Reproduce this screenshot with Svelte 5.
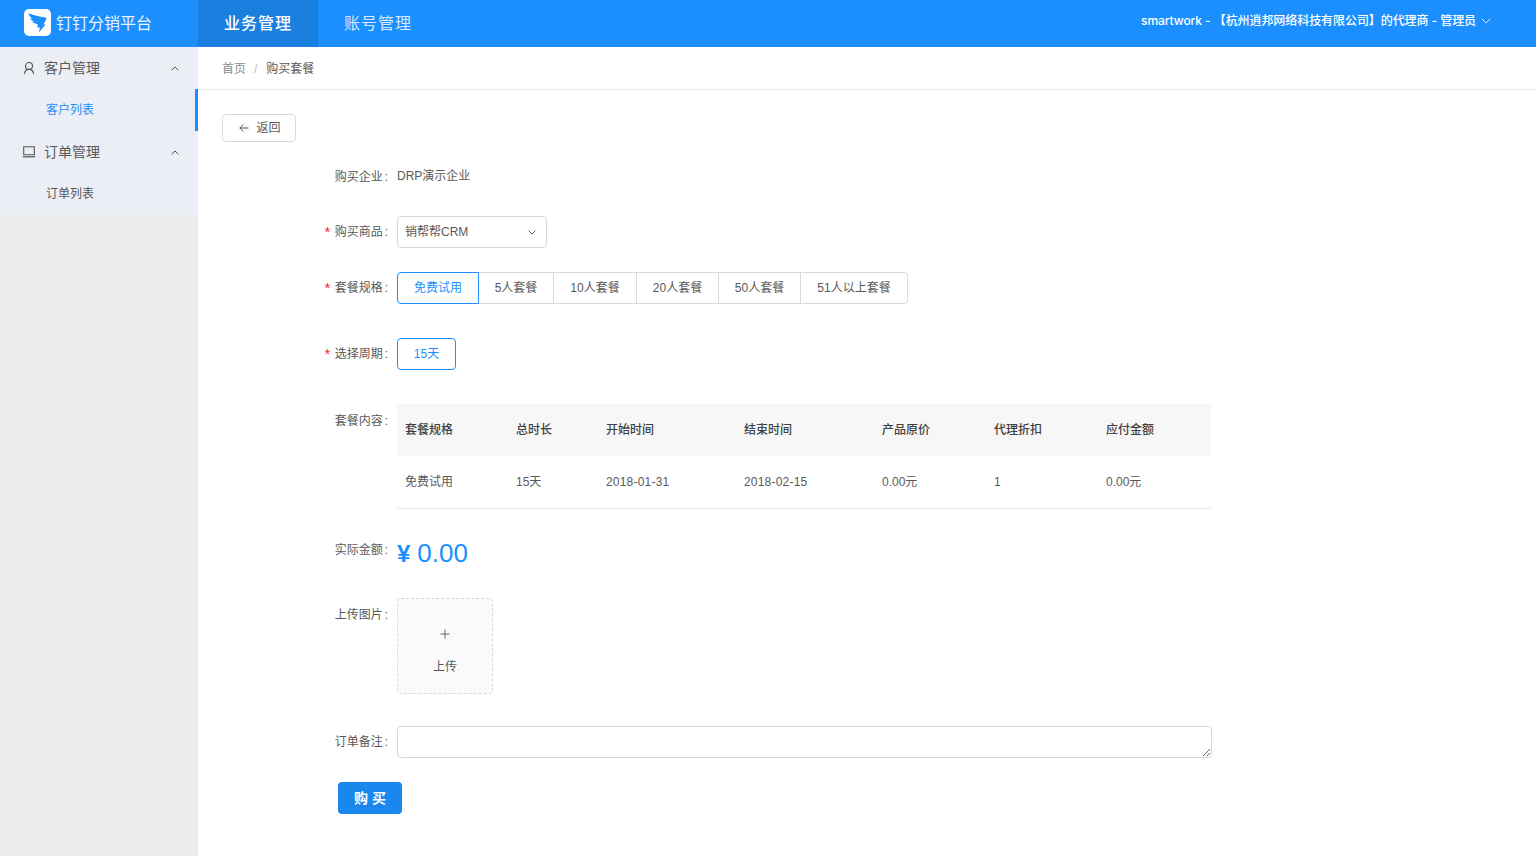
<script>
  const specs = ['免费试用', '5人套餐', '10人套餐', '20人套餐', '50人套餐', '51人以上套餐'];
  const heads = ['套餐规格', '总时长', '开始时间', '结束时间', '产品原价', '代理折扣', '应付金额'];
  const row = ['免费试用', '15天', '2018-01-31', '2018-02-15', '0.00元', '1', '0.00元'];
</script>

<div class="page">
  <header class="top">
    <div class="brand">
      <span class="logo">
        <svg viewBox="0 0 27 27" width="27" height="27">
          <path fill="#1c8fff" d="M4.5 4.2 C9 6 15.5 7.6 21.6 8.6 C22.6 9 22.3 10.4 21.4 12 L19.4 15.4 L21.6 15.4 L14.8 23.6 L16 18.6 L13.2 18.6 L14 15.4 C11.4 14.8 9.4 14 7.6 12.8 L11 12.8 C8.6 12 6.6 10.6 5.8 9.4 L8.6 9.6 C6.4 8.4 4.8 6.4 4.5 4.2 Z"/>
        </svg>
      </span>
      <span class="brand-name">钉钉分销平台</span>
    </div>
    <nav class="tabs">
      <span class="tab active">业务管理</span>
      <span class="tab">账号管理</span>
    </nav>
    <div class="user">
      <span>smartwork - 【杭州逍邦网络科技有限公司】的代理商 - 管理员</span>
      <svg class="user-chev" viewBox="0 0 10 6" width="10" height="6"><path d="M.7.7 5 5 9.3.7" fill="none" stroke="#cfe6ff" stroke-width="1"/></svg>
    </div>
  </header>

  <div class="body">
    <aside class="side">
      <div class="menu">
        <div class="group">
          <svg class="gi" viewBox="0 0 14 14" width="14" height="14"><circle cx="7" cy="5" r="3.5" fill="none" stroke="#555" stroke-width="1.1"/><path d="M2.500 13c.2-2.700 1.800-4.600 4.500-4.600s4.300 1.900 4.500 4.600" fill="none" stroke="#555" stroke-width="1.1"/></svg>
          <span class="group-name">客户管理</span>
          <svg class="chev" viewBox="0 0 8 5" width="8" height="5"><path d="M.6 4.300 4 1l3.400 3.300" fill="none" stroke="#555" stroke-width="1"/></svg>
        </div>
        <div class="item selected">客户列表</div>
        <div class="group">
          <svg class="gi" viewBox="0 0 14 14" width="14" height="14"><path d="M1.700 1.700h10.600v8.100H1.700z" fill="none" stroke="#555" stroke-width="1.1"/><path d="M.8 11.800h12.400" stroke="#555" stroke-width="1.200"/></svg>
          <span class="group-name">订单管理</span>
          <svg class="chev" viewBox="0 0 8 5" width="8" height="5"><path d="M.6 4.300 4 1l3.400 3.300" fill="none" stroke="#555" stroke-width="1"/></svg>
        </div>
        <div class="item">订单列表</div>
      </div>
    </aside>

    <main class="main">
      <div class="crumbs">
        <span class="crumb">首页</span>
        <span class="sep">/</span>
        <span class="crumb last">购买套餐</span>
      </div>

      <button class="back">
        <svg viewBox="0 0 10 10" width="10" height="10"><path d="M9.500 5H.8M4.400 1.400.8 5l3.600 3.600" fill="none" stroke="#555" stroke-width="1"/></svg>
        <span>返回</span>
      </button>

      <div class="form">
        <div class="line first">
          <span class="label low">购买企业</span>
          <span class="value">DRP演示企业</span>
        </div>

        <div class="line gap24">
          <span class="label req">购买商品</span>
          <div class="select">
            <span>销帮帮CRM</span>
            <svg viewBox="0 0 8 5" width="8" height="5"><path d="M.6.7 4 4l3.400-3.300" fill="none" stroke="#666" stroke-width="1"/></svg>
          </div>
        </div>

        <div class="line gap24">
          <span class="label req">套餐规格</span>
          <div class="radios">
            {#each specs as s, i}
              <span class="radio" class:on={i === 0}>{s}</span>
            {/each}
          </div>
        </div>

        <div class="line gap34">
          <span class="label req">选择周期</span>
          <div class="radios">
            <span class="radio on solo">15天</span>
          </div>
        </div>

        <div class="line gap34 top-align">
          <span class="label low">套餐内容</span>
          <table class="plan">
            <thead>
              <tr>{#each heads as h}<th>{h}</th>{/each}</tr>
            </thead>
            <tbody>
              <tr>{#each row as c}<td>{c}</td>{/each}</tr>
            </tbody>
          </table>
        </div>

        <div class="line amount-line top-align">
          <span class="label low">实际金额</span>
          <div class="amount"><span class="yen">¥</span><span class="num">0.00</span></div>
        </div>

        <div class="line upload-line top-align">
          <span class="label low">上传图片</span>
          <div class="upload">
            <svg viewBox="0 0 10 10" width="10" height="10"><path d="M5 .5v9M.5 5h9" stroke="#666" stroke-width="1"/></svg>
            <span>上传</span>
          </div>
        </div>

        <div class="line gap32">
          <span class="label">订单备注</span>
          <textarea class="note"></textarea>
        </div>

        <button class="buy">购 买</button>
      </div>
    </main>
  </div>
</div>

<style>
  :global(body) {
    margin: 0;
    background: #fff;
  }
  .page {
    width: 1536px;
    height: 856px;
    overflow: hidden;
    display: flex;
    flex-direction: column;
    font-family: "Liberation Sans", "Noto Sans CJK SC", sans-serif;
    font-size: 12px;
    line-height: 20px;
    color: #595959;
  }
  .top {
    height: 47px;
    flex: none;
    display: flex;
    align-items: center;
    background: #1c8fff;
    color: #fff;
  }
  .brand {
    width: 198px;
    box-sizing: border-box;
    padding-left: 24px;
    display: flex;
    align-items: center;
    gap: 5px;
  }
  .logo {
    width: 27px;
    height: 27px;
    background: #fff;
    border-radius: 5px;
    display: flex;
    margin-top: -3px;
  }
  .brand-name {
    font-size: 16px;
    line-height: 20px;
    color: #e8f4ff;
  }
  .tabs {
    display: flex;
    align-self: stretch;
  }
  .tab {
    width: 120px;
    padding-left: 26px;
    box-sizing: border-box;
    line-height: 47px;
    font-size: 16px;
    letter-spacing: 1px;
    color: #d6eaff;
  }
  .tab.active {
    background: #1a7fdf;
    color: #fff;
    font-weight: 500;
  }
  .user {
    margin-left: auto;
    margin-right: 45px;
    display: flex;
    align-items: center;
    gap: 5px;
    font-family: Inter, "Noto Sans CJK SC", sans-serif;
    font-weight: 500;
    letter-spacing: -0.07px;
    margin-top: -6px;
  }
  .body {
    flex: 1;
    display: flex;
    min-height: 0;
  }
  .side {
    width: 198px;
    flex: none;
    background: #ececec;
  }
  .menu {
    background: #ebeef5;
  }
  .group {
    height: 42px;
    display: flex;
    align-items: center;
    padding-left: 22px;
    padding-right: 19px;
    font-size: 14px;
    line-height: 40px;
    color: #595959;
  }
  .gi {
    flex: none;
    margin-right: 8px;
  }
  .group-name {
    flex: 1;
  }
  .item {
    height: 42px;
    line-height: 42px;
    padding-left: 46px;
    color: #595959;
    box-sizing: border-box;
  }
  .item.selected {
    color: #1c8fff;
    border-right: 3px solid #1c8fff;
  }
  .main {
    flex: 1;
    min-width: 0;
    background: #fff;
  }
  .crumbs {
    height: 43px;
    box-sizing: border-box;
    border-bottom: 1px solid #e8e8e8;
    padding: 2px 0 0 24px;
    display: flex;
    align-items: center;
    color: #8c8c8c;
  }
  .sep {
    margin: 0 9px 0 8px;
    color: #bfbfbf;
  }
  .crumb.last {
    color: #595959;
  }
  .back {
    margin: 24px 0 0 24px;
    width: 74px;
    height: 28px;
    display: flex;
    align-items: center;
    justify-content: center;
    gap: 7px;
    background: #fff;
    border: 1px solid #d9d9d9;
    border-radius: 4px;
    padding: 0 0 0 2px;
    font: inherit;
    color: #595959;
  }
  .form {
    padding-left: 24px;
  }
  .line {
    display: flex;
    align-items: center;
    min-height: 32px;
  }
  .line.first {
    margin-top: 18px;
  }
  .gap24 {
    margin-top: 24px;
  }
  .gap32 {
    margin-top: 32px;
  }
  .gap34 {
    margin-top: 34px;
  }
  .top-align {
    align-items: flex-start;
  }
  .label {
    width: 175px;
    height: 32px;
    flex: none;
    box-sizing: border-box;
    text-align: right;
    padding-right: 9px;
    line-height: 32px;
  }
  .label.low {
    line-height: 34px;
  }
  .label::after {
    content: ":";
    margin-left: 2px;
  }
  .label.req::before {
    content: "*";
    color: #f5222d;
    margin-right: 3px;
    font-family: "Liberation Mono", monospace;
    font-size: 14px;
    line-height: 14px;
    vertical-align: -2px;
  }
  .value {
    line-height: 32px;
    height: 32px;
  }
  .select {
    width: 150px;
    height: 32px;
    box-sizing: border-box;
    border: 1px solid #d9d9d9;
    border-radius: 4px;
    display: flex;
    align-items: center;
    justify-content: space-between;
    padding: 0 10px 0 7px;
  }
  .radios {
    display: flex;
  }
  .radio {
    height: 32px;
    line-height: 30px;
    box-sizing: border-box;
    text-align: center;
    border: 1px solid #d9d9d9;
    border-left: 0;
    color: #595959;
  }
  .radio:nth-child(1) {
    width: 82px;
  }
  .radio:nth-child(2) {
    width: 75px;
  }
  .radio:nth-child(3) {
    width: 83px;
  }
  .radio:nth-child(4),
  .radio:nth-child(5) {
    width: 82px;
  }
  .radio:nth-child(6) {
    width: 107px;
  }
  .radio:first-child {
    border-left: 1px solid #d9d9d9;
    border-radius: 4px 0 0 4px;
  }
  .radio:last-child {
    border-radius: 0 4px 4px 0;
  }
  .radio.on {
    border: 1px solid #1c8fff;
    color: #1c8fff;
  }
  .radio.solo {
    width: 59px;
    border-radius: 4px;
  }
  .plan {
    width: 814px;
    table-layout: fixed;
    border-collapse: collapse;
    font-size: 12px;
  }
  .plan th,
  .plan td {
    height: 52px;
    padding: 0 8px;
    text-align: left;
    box-sizing: border-box;
  }
  .plan th {
    background: #f7f7f7;
    font-weight: 500;
    color: #404040;
  }
  .plan th:first-child {
    border-radius: 4px 0 0 0;
  }
  .plan th:last-child {
    border-radius: 0 4px 0 0;
  }
  .plan td {
    border-bottom: 1px solid #e8e8e8;
    color: #595959;
  }
  .plan td:nth-child(3),
  .plan td:nth-child(4) {
    letter-spacing: 0.2px;
  }
  .plan th:nth-child(1) {
    width: 111px;
  }
  .plan th:nth-child(2) {
    width: 90px;
  }
  .plan th:nth-child(3),
  .plan th:nth-child(4) {
    width: 138px;
  }
  .plan th:nth-child(5),
  .plan th:nth-child(6) {
    width: 112px;
  }
  .amount-line {
    margin-top: 24px;
  }
  .amount {
    display: flex;
    align-items: baseline;
    color: #1c8fff;
    line-height: 40px;
  }
  .yen {
    font-size: 24px;
    font-weight: 700;
    margin-right: 7px;
  }
  .num {
    font-size: 26px;
  }
  .upload-line {
    margin-top: 24px;
  }
  .upload {
    width: 96px;
    height: 96px;
    box-sizing: border-box;
    background: #fafafa;
    border: 1px dashed #d9d9d9;
    border-radius: 4px;
    display: flex;
    flex-direction: column;
    align-items: center;
    padding-top: 30px;
    gap: 18px;
  }
  .note {
    width: 815px;
    height: 32px;
    box-sizing: border-box;
    border: 1px solid #d9d9d9;
    border-radius: 4px;
    padding: 4px 11px;
    margin: 0;
    display: block;
    outline: none;
  }
  .buy {
    display: block;
    margin: 24px 0 0 116px;
    width: 64px;
    height: 32px;
    background: #1a87ee;
    border: 0;
    border-radius: 4px;
    color: #fff;
    font: inherit;
    font-size: 14px;
    font-weight: 700;
    padding: 0;
  }
</style>
